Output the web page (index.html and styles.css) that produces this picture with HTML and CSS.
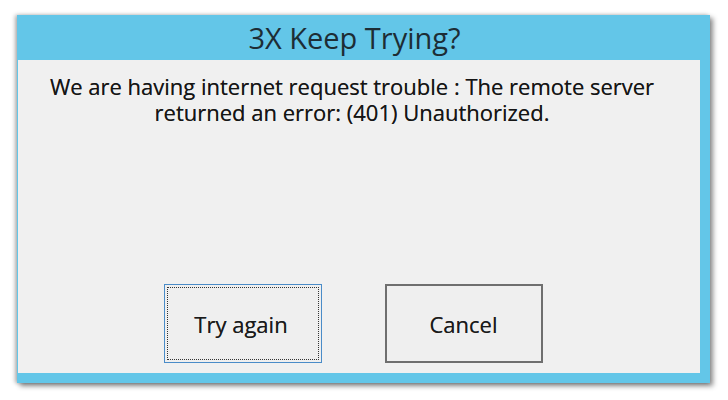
FILE: index.html
```html
<!DOCTYPE html>
<html>
<head>
<meta charset="utf-8">
<link rel="stylesheet" href="styles.css">
</head>
<body>
<div class="window">
  <div class="titlebar">3X Keep Trying?</div>
  <div class="content">
    <p class="message">We are having internet request trouble : The remote server<br>returned an error: (401) Unauthorized.</p>
    <div class="buttons">
      <button class="btn btn-default"><span class="focus">Try again</span></button>
      <button class="btn btn-cancel">Cancel</button>
    </div>
  </div>
</div>
</body>
</html>
```
FILE: styles.css
```css
html, body {
  margin: 0;
  padding: 0;
  background: #ffffff;
}
body {
  width: 728px;
  height: 400px;
  font-family: "Open Sans", "Noto Sans", sans-serif;
}
.window {
  margin: 15px 0 0 17px;
  width: 693px;
  height: 368px;
  background: #63c6e8;
  box-shadow: 3px 3px 5px rgba(0,0,0,0.45), -2px 0 4px rgba(0,0,0,0.3);
  display: flex;
  flex-direction: column;
}
.titlebar {
  height: 45px;
  display: flex;
  align-items: center;
  justify-content: center;
  font-size: 29px;
  color: #1d2d35;
  padding-right: 18px;
  padding-bottom: 1px;
  box-sizing: border-box;
}
.content {
  flex: 1;
  background: #f0f0f0;
  margin: 0 10px 10px 1px;
  display: flex;
  flex-direction: column;
  align-items: center;
}
.message {
  margin: 13px 0 0 0;
  font-size: 22px;
  line-height: 26px;
  text-align: center;
  color: #151515;
  padding-right: 14px;
  text-shadow: 0 0 0.4px rgba(0,0,0,0.6);
}
.buttons {
  margin-top: auto;
  margin-bottom: 10px;
  display: flex;
  gap: 63px;
  padding-right: 12px;
}
.btn {
  width: 158px;
  height: 79px;
  background: #efefef;
  font-family: inherit;
  font-size: 22px;
  color: #1a1a1a;
  padding: 0;
  display: flex;
  align-items: center;
  justify-content: center;
  text-shadow: 0 0 0.4px rgba(0,0,0,0.6);
}
.btn-default {
  border: 1px solid #4a8cc8;
  padding: 2px;
}
.focus {
  flex: 1;
  align-self: stretch;
  display: flex;
  align-items: center;
  justify-content: center;
  border: 1px dotted #333;
  padding-right: 3px;
}
.btn-cancel {
  border: 2px solid #6f6f6f;
}
```
